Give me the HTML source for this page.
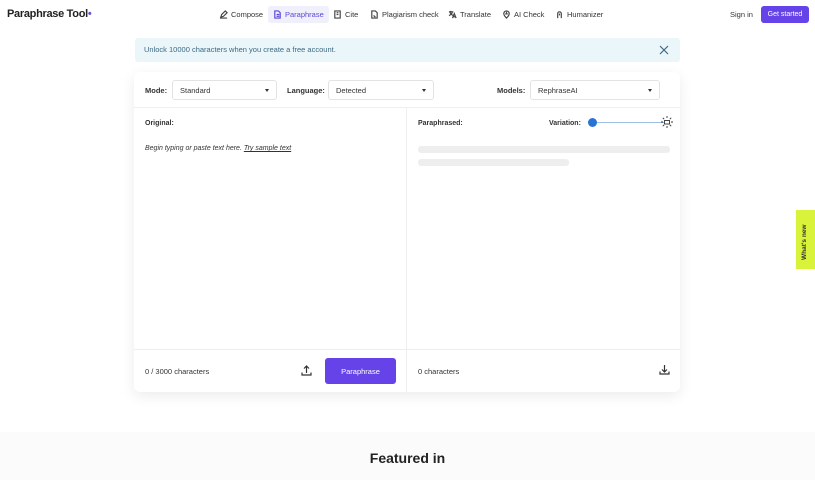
<!DOCTYPE html>
<html><head><style>
*{box-sizing:border-box;margin:0;padding:0}
body{width:815px;height:480px;overflow:hidden;background:#fff;font-family:"Liberation Sans",sans-serif;color:#222;position:relative;font-size:8px}
.abs{position:absolute}
.nav a{position:absolute;top:10px;font-size:7.5px;color:#333;white-space:nowrap;display:flex;align-items:center;gap:3px}
.nav svg{width:9px;height:9px;fill:none;stroke:#444;stroke-width:1.3}
.sel{position:absolute;top:80px;height:20px;border:1px solid #e3e3e3;border-radius:3px;font-size:7.5px;padding:5px 7px;color:#333}
.sel:after{content:"";position:absolute;right:7px;top:8px;border:2.5px solid transparent;border-top:3px solid #333}
.lbl{position:absolute;font-size:7.5px;font-weight:bold;color:#333}
</style></head><body>
<div class="abs" style="left:7px;top:8px;font-size:11px;font-weight:bold;letter-spacing:-0.3px;color:#222">Paraphrase Tool<span style="color:#6b4fe0">•</span></div>
<div class="nav">
<a style="left:219px"><svg viewBox="0 0 10 10"><path d="M2 8l1-3 4-4 2 2-4 4z M1 9h8"/></svg>Compose</a>
<a style="left:268px;top:6px;background:#f0effc;padding:4px 5px;border-radius:3px;color:#5b46d9"><svg viewBox="0 0 10 10" style="stroke:#5b46d9"><path d="M2 1h4l2 2v6H2z M4 5h3 M4 7h3"/></svg>Paraphrase</a>
<a style="left:333px"><svg viewBox="0 0 10 10"><path d="M2 1h6v8H2z M4 3h2 M4 5h2"/></svg>Cite</a>
<a style="left:370px"><svg viewBox="0 0 10 10"><path d="M2 1h4l2 2v6H2z M4 6l2 2"/></svg>Plagiarism check</a>
<a style="left:448px"><svg viewBox="0 0 10 10"><path d="M1 2h5 M3 1v1 M2 2c1 3 3 4 4 4 M5 2c-1 3-3 4-4 4 M5 9l2-5 2 5 M6 7.5h2"/></svg>Translate</a>
<a style="left:502px"><svg viewBox="0 0 10 10"><path d="M5 9C2 6 2 5 2 4a3 3 0 016 0c0 1 0 2-3 5z M4 5l1-2 1 2"/></svg>AI Check</a>
<a style="left:555px"><svg viewBox="0 0 10 10"><path d="M3 9V4a2 2 0 014 0v5 M5 4v2"/></svg>Humanizer</a>
<a style="left:730px">Sign in</a>
</div>
<div class="abs" style="left:761px;top:6px;width:48px;height:17px;background:#6543e8;border-radius:3px"></div>
<div class="abs" style="left:761px;top:10px;width:48px;color:#fff;font-size:7px;text-align:center;line-height:9px">Get started</div>
<div class="abs" style="left:135px;top:38px;width:545px;height:24px;background:#ebf6fb;border-radius:3px;font-size:7.5px;color:#3c6a82;padding:7px 9px">Unlock 10000 characters when you create a free account.
<svg class="abs" style="right:11px;top:7px" width="10" height="10" viewBox="0 0 10 10"><path d="M1 1l8 8M9 1L1 9" stroke="#3c6a82" stroke-width="1.2"/></svg></div>
<div class="abs" style="left:134px;top:72px;width:546px;height:320px;background:#fff;border-radius:6px;box-shadow:0 4px 14px rgba(0,0,0,0.08)">
<div class="abs" style="left:0;top:35px;width:546px;height:1px;background:#eee"></div>
<div class="abs" style="left:272px;top:36px;width:1px;height:284px;background:#eee"></div>
<div class="abs" style="left:0;top:277px;width:546px;height:1px;background:#eee"></div>
</div>
<div class="lbl" style="left:145px;top:86px">Mode:</div>
<div class="sel" style="left:172px;width:105px">Standard</div>
<div class="lbl" style="left:287px;top:86px">Language:</div>
<div class="sel" style="left:328px;width:106px">Detected</div>
<div class="lbl" style="left:497px;top:86px">Models:</div>
<div class="sel" style="left:530px;width:130px">RephraseAI</div>
<div class="lbl" style="left:145px;top:120px;font-size:7px">Original:</div>
<div class="abs" style="left:145px;top:145px;font-size:7px;font-style:italic;color:#333">Begin typing or paste text here. <span style="text-decoration:underline">Try sample text</span></div>
<div class="lbl" style="left:418px;top:120px;font-size:7px">Paraphrased:</div>
<div class="lbl" style="left:549px;top:120px;font-size:7px">Variation:</div>
<div class="abs" style="left:592px;top:122px;width:72px;height:1px;background:#9cc0e8"></div>
<div class="abs" style="left:588px;top:118px;width:9px;height:9px;border-radius:50%;background:#2a73d6"></div>
<svg class="abs" style="left:661px;top:116px" width="12" height="12" viewBox="0 0 12 12" fill="none" stroke="#333" stroke-width="0.9"><path d="M6 0v2M6 10v2M0 6h2M10 6h2M1.8 1.8l1.4 1.4M8.8 8.8l1.4 1.4M10.2 1.8L8.8 3.2M3.2 8.8L1.8 10.2"/><rect x="3.5" y="4.5" width="5" height="3.5"/></svg>
<div class="abs" style="left:418px;top:146px;width:252px;height:7px;background:#eee;border-radius:3px"></div>
<div class="abs" style="left:418px;top:159px;width:151px;height:7px;background:#eee;border-radius:3px"></div>
<div class="abs" style="left:145px;top:367px;font-size:7.5px;color:#333">0 / 3000 characters</div>
<svg class="abs" style="left:301px;top:365px" width="11" height="11" viewBox="0 0 11 11" fill="none" stroke="#333" stroke-width="1.2"><path d="M5.5 8V1M3 3.5l2.5-2.5 2.5 2.5M1 7.5v2.5h9V7.5"/></svg>
<div class="abs" style="left:325px;top:358px;width:71px;height:26px;background:#6543e8;border-radius:3px;color:#fff;font-size:7.5px;display:flex;align-items:center;justify-content:center">Paraphrase</div>
<div class="abs" style="left:418px;top:367px;font-size:7.5px;color:#333">0 characters</div>
<svg class="abs" style="left:659px;top:364px" width="11" height="11" viewBox="0 0 11 11" fill="none" stroke="#333" stroke-width="1.2"><path d="M5.5 1v7M3 5.5l2.5 2.5 2.5-2.5M1 7.5v2.5h9V7.5"/></svg>
<div class="abs" style="left:796px;top:210px;width:19px;height:59px;background:#d9f23a"><div style="position:absolute;left:5px;top:50px;transform:rotate(-90deg);transform-origin:0 0;font-size:6.5px;font-weight:bold;white-space:nowrap;color:#333">What's new</div></div>
<div class="abs" style="left:0;top:432px;width:815px;height:48px;background:#fbfbfb"></div>
<div class="abs" style="left:0;top:450px;width:815px;text-align:center;font-size:14px;font-weight:bold;color:#222">Featured in</div>
</body></html>
